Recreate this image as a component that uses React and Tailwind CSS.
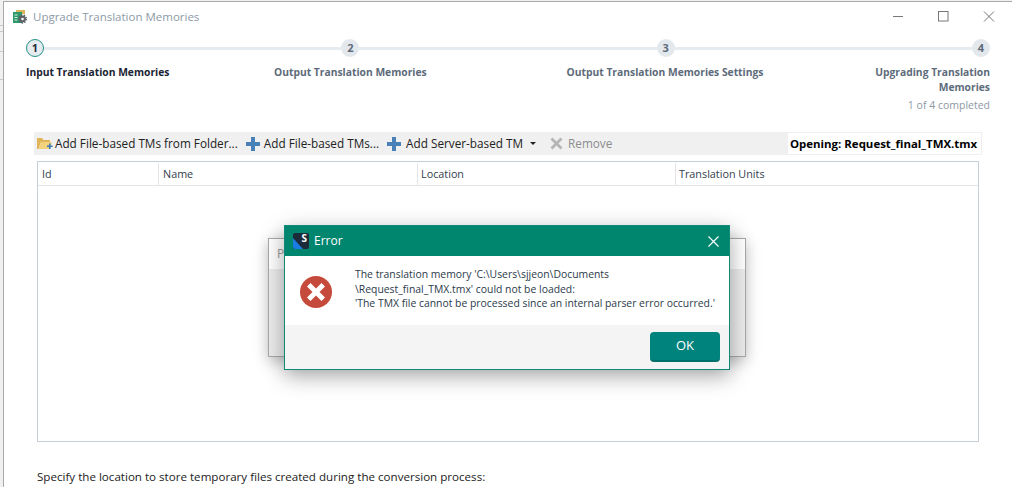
function Step({ n, active }) {
  return (
    <div
      className={
        active
          ? 'w-[18px] h-[18px] shrink-0 rounded-full bg-[#e6ebef] border border-[#1f9186] flex items-center justify-center text-[11px] font-bold text-[#1f2d3d]'
          : 'w-[18px] h-[18px] shrink-0 rounded-full bg-[#e3e8ec] flex items-center justify-center text-[11px] font-bold text-[#5d6b7a]'
      }
    >
      {n}
    </div>
  )
}

function AppIcon() {
  return (
    <svg width="14" height="14" viewBox="0 0 14 14" className="shrink-0">
      <rect x="3" y="0" width="9" height="4" fill="#d9b65a" />
      <rect x="0" y="2" width="9" height="11" fill="#2e9a6b" />
      <rect x="1.5" y="4.5" width="3" height="1" fill="#d8f0e4" />
      <rect x="1.5" y="7" width="3" height="1" fill="#d8f0e4" />
      <rect x="1.5" y="9.5" width="3" height="1" fill="#d8f0e4" />
      <circle cx="9.5" cy="9" r="3.4" fill="#5d6166" />
      <circle cx="9.5" cy="9" r="4" fill="none" stroke="#5d6166" strokeWidth="1.4" strokeDasharray="1.4 1.4" />
      <circle cx="9.5" cy="9" r="1.3" fill="#fff" />
    </svg>
  )
}

function FolderIcon() {
  return (
    <svg width="16" height="15" viewBox="0 0 16 15" className="shrink-0">
      <path d="M0 2h5l1.5 2H13v2H4L1.5 13H0z" fill="#e0b458" />
      <path d="M4 6h11l-2.5 7H1.5z" fill="#f3d27e" />
      <path d="M10 9.5h2v-2h1.6v2h2v1.6h-2v2H12v-2h-2z" fill="#3f7ab5" />
    </svg>
  )
}

function BluePlus() {
  return (
    <svg width="14" height="14" viewBox="0 0 14 14" className="shrink-0">
      <path d="M5 0h4v5h5v4H9v5H5V9H0V5h5z" fill="#4a80b8" />
    </svg>
  )
}

function GrayRemove() {
  return (
    <svg width="13" height="13" viewBox="0 0 13 13" className="shrink-0">
      <path d="M2.5 0.5 6.5 4.5 10.5 0.5 12.5 2.5 8.5 6.5 12.5 10.5 10.5 12.5 6.5 8.5 2.5 12.5 0.5 10.5 4.5 6.5 0.5 2.5z" fill="#b5b5b5" />
    </svg>
  )
}

function SdlLogo() {
  return (
    <div className="relative w-4 h-4 shrink-0 rounded-[2px] bg-[#1c2b3a] overflow-hidden">
      <svg width="16" height="16" viewBox="0 0 16 16" className="absolute inset-0">
        <path d="M0 5 10 16H0z" fill="#1b7be0" />
      </svg>
      <span className="absolute right-[2px] top-[-2px] text-[10px] leading-[14px] font-bold text-white">S</span>
    </div>
  )
}

function ErrorIcon() {
  return (
    <svg width="32" height="32" viewBox="0 0 32 32" className="shrink-0">
      <circle cx="16" cy="16" r="16" fill="#c64a3c" />
      <path d="M10.5 7 16 12.5 21.5 7 25 10.5 19.5 16 25 21.5 21.5 25 16 19.5 10.5 25 7 21.5 12.5 16 7 10.5z" fill="#fff" />
    </svg>
  )
}

function WindowButtons() {
  return (
    <svg width="102" height="11" viewBox="0 0 102 11" className="shrink-0 ml-auto mr-[17px]" fill="none" stroke="#777" strokeWidth="1">
      <path d="M0 5.5h10" />
      <rect x="45.5" y="0.5" width="9.5" height="9.5" />
      <path d="M91 0.5l10 10M101 0.5l-10 10" />
    </svg>
  )
}

export default function App() {
  return (
    <div
      className="relative flex w-[1012px] h-[487px] overflow-hidden bg-[#f0f0f0] pt-[1px] text-[12px] text-[#1f1f1f]"
      style={{ fontFamily: '"Open Sans", "Noto Sans", sans-serif' }}
    >
      {/* Sliver of the window underneath */}
      <div className="w-[3px] shrink-0 pt-[24px]">
        <div className="h-[7px] border-y border-[#c8c8c8]" />
        <div className="h-[20px] border-b border-[#c8c8c8]" />
        <div className="h-[28px] border-b border-[#c8c8c8]" />
      </div>

      <div className="flex-1 h-full bg-white border-l border-t border-[#a9a9a9]">
        {/* Title bar */}
        <div className="flex items-center h-[29px] pl-[9px]">
          <AppIcon />
          <span className="ml-[6px] text-[11.5px] text-[#8d9aa8]">Upgrade Translation Memories</span>
          <WindowButtons />
        </div>

        {/* Stepper */}
        <div className="flex items-center ml-[22px] w-[964px] mt-[8px]">
          <Step n="1" active />
          <div className="flex-1 h-[3px] bg-[#e6ebef]" />
          <Step n="2" />
          <div className="flex-1 h-[3px] bg-[#e6ebef]" />
          <Step n="3" />
          <div className="flex-1 h-[3px] bg-[#e6ebef]" />
          <Step n="4" />
        </div>
        <div className="flex items-start ml-[22px] w-[964px] mt-[8px] text-[10.3px] leading-[15px] font-bold text-[#5d6b7a]">
          <div className="w-[143px] text-[#1a2433] whitespace-nowrap">Input Translation Memories</div>
          <div className="ml-[105px] w-[152px] text-center whitespace-nowrap">Output Translation Memories</div>
          <div className="ml-[140px] w-[198px] text-center whitespace-nowrap">Output Translation Memories Settings</div>
          <div className="ml-auto w-[122px] text-right">Upgrading Translation Memories</div>
        </div>
        <div className="mr-[22px] mt-[3px] text-right text-[10.5px] leading-[15px] text-[#8d98a3]">1 of 4 completed</div>

        {/* Toolbar */}
        <div className="flex items-stretch ml-[30px] mt-[19px] w-[948px] h-[23px]">
          <div className="flex-1 flex items-center bg-[#f0f0f0] pl-[3px] text-[11.75px] text-[#222]">
            <FolderIcon />
            <span className="ml-[2px] mr-[8px]">Add File-based TMs from Folder...</span>
            <BluePlus />
            <span className="ml-[4px] mr-[8px]">Add File-based TMs...</span>
            <BluePlus />
            <span className="ml-[5px]">Add Server-based TM</span>
            <span className="ml-[7px] w-0 h-0 border-x-[3px] border-x-transparent border-t-[3px] border-t-[#222]" />
            <span className="ml-[14px]"><GrayRemove /></span>
            <span className="ml-[5px] text-[#8c8c8c]">Remove</span>
          </div>
          <div className="w-[195px] flex items-center pl-[2px] border border-[#efefef] text-[11.45px] font-bold text-black whitespace-nowrap">
            Opening: Request_final_TMX.tmx
          </div>
        </div>

        {/* Table */}
        <div className="ml-[33px] mt-[6px] w-[942px] h-[281px] border border-[#c5ced6] bg-white">
          <div className="grid grid-cols-[121px_259px_258px_1fr] h-[24px] pt-[1px] border-b border-[#e4e4e4] text-[10.8px] text-[#33404d]">
            <div className="flex items-center pl-[4px] border-r border-[#e4e4e4]">Id</div>
            <div className="flex items-center pl-[4px] border-r border-[#e4e4e4]">Name</div>
            <div className="flex items-center pl-[3px] border-r border-[#e4e4e4]">Location</div>
            <div className="flex items-center pl-[3px]">Translation Units</div>
          </div>
        </div>

        <div className="ml-[33px] mt-[26px] text-[11.6px] text-[#222] whitespace-nowrap">Specify the location to store temporary files created during the conversion process:</div>
      </div>

      {/* Dialog behind the error */}
      <div className="absolute left-[268px] top-[238px] w-[478px] h-[119px] border border-[#a8a8a8] bg-[#ececec] shadow-[0_4px_14px_rgba(0,0,0,0.25)]">
        <div className="h-[30px] bg-white pl-[8px] flex items-center text-[#9a9a9a]">P</div>
      </div>

      {/* Error dialog */}
      <div className="absolute left-[284px] top-[225px] w-[446px] h-[145px] flex flex-col border border-[#0e8a76] bg-white shadow-[0_6px_20px_rgba(0,0,0,0.35)]">
        <div className="h-[30px] shrink-0 bg-[#00856f] flex items-center pl-[8px] text-white">
          <SdlLogo />
          <span className="ml-[5px]">Error</span>
          <svg width="11" height="11" viewBox="0 0 11 11" className="ml-auto mr-[10px]" fill="none" stroke="#fff" strokeWidth="1.1">
            <path d="M0.5 0.5l10 10M10.5 0.5l-10 10" />
          </svg>
        </div>
        <div className="flex-1 flex items-start pl-[15px] pt-[20px]">
          <ErrorIcon />
          <div className="ml-[23px] -mt-[9px] text-[10.4px] leading-[14.5px] text-[#2b3a4a] whitespace-nowrap">
            <div>The translation memory 'C:\Users\sjjeon\Documents</div>
            <div>\Request_final_TMX.tmx' could not be loaded:</div>
            <div>'The TMX file cannot be processed since an internal parser error occurred.'</div>
          </div>
        </div>
        <div className="h-[44px] shrink-0 bg-[#f4f4f4] flex items-start justify-end pt-[7px] pr-[9px]">
          <button className="w-[70px] h-[30px] rounded-[4px] bg-[#00827d] border-b-2 border-[#00706b] text-[13px] text-white">OK</button>
        </div>
      </div>
    </div>
  )
}
